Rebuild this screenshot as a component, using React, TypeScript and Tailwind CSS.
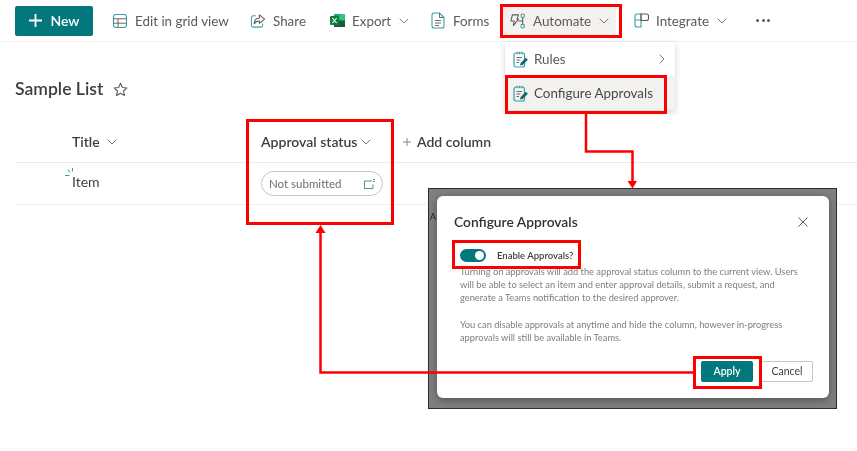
const Chevron = ({ className = "" }: { className?: string }) => (
  <svg width="10" height="6" viewBox="0 0 10 6" className={className} fill="none" stroke="#7a7876" strokeWidth="1">
    <path d="M.7.7 5 5 9.3.7" />
  </svg>
);
const Teal = "#3a9ea5";
const Dark = "#5b5a58";

const GridIcon = () => (
  <svg width="16" height="16" viewBox="0 0 16 16" fill="none" stroke={Teal} strokeWidth="1.1">
    <rect x="1.5" y="1.5" width="13" height="13" rx="2.5" />
    <path d="M1.5 5.8h13M1.5 10.2h13M6 5.8v8.7" stroke={Dark} strokeWidth=".9" />
  </svg>
);
const ShareIcon = () => (
  <svg width="17" height="16" viewBox="0 0 17 16" fill="none" strokeWidth="1.1">
    <path d="M6 2.500H3.500a2 2 0 0 0-2 2v8a2 2 0 0 0 2 2h8a2 2 0 0 0 2-2V11" stroke={Teal} />
    <path d="M10 1.500 15.500 6 10 10.500V8c-3 0-4.500 1-5.500 3 0-3.500 2-6 5.500-6.300z" stroke={Dark} strokeLinejoin="round" />
  </svg>
);
const ExcelIcon = () => (
  <svg width="15" height="15" viewBox="0 0 15 15">
    <rect x="4" y="1" width="11" height="13" rx="1" fill="#21a366" />
    <rect x="9.500" y="1" width="5.500" height="6.500" fill="#33c481" />
    <rect x="4" y="7.500" width="11" height="6.500" fill="#185c37" />
    <rect x="0" y="3" width="9" height="9" rx="1" fill="#107c41" />
    <path d="m2.400 5 4.200 5M6.600 5l-4.200 5" stroke="#fff" strokeWidth="1.100" />
  </svg>
);
const FormsIcon = () => (
  <svg width="14" height="17" viewBox="0 0 14 17" fill="none" strokeWidth="1.1">
    <path d="M8.500 1H3a2 2 0 0 0-2 2v11a2 2 0 0 0 2 2h8a2 2 0 0 0 2-2V5.500z" stroke={Teal} />
    <path d="M8.500 1v4.500H13M4 8.500h6M4 11h6M4 13.500h4" stroke={Dark} strokeWidth=".9" />
  </svg>
);
const AutomateIcon = () => (
  <svg width="17" height="16" viewBox="0 0 17 16" fill="none" strokeWidth="1.1">
    <path d="M2.500 1.500h6.500L7.500 6H9L3.500 13l1-5H1z" stroke={Dark} strokeLinejoin="round" />
    <circle cx="13.500" cy="2.500" r="1.900" stroke={Teal} />
    <circle cx="13.500" cy="13.500" r="1.900" stroke={Teal} />
    <path d="M13.500 4.500v7M13.500 8H9" stroke={Dark} />
  </svg>
);
const IntegrateIcon = () => (
  <svg width="15" height="16" viewBox="0 0 15 16" fill="none" strokeWidth="1.1">
    <path d="M7 1H3a2 2 0 0 0-2 2v4h6zM7 7H1v5a2 2 0 0 0 2 2h4z" stroke={Teal} />
    <path d="M7 1h5.500a2 2 0 0 1 2 2v2.500a2 2 0 0 1-2 2H7z" stroke={Dark} />
  </svg>
);
const RuleIcon = () => (
  <svg width="16" height="17" viewBox="0 0 16 17" fill="none">
    <rect x="1" y="2" width="10.500" height="14" rx="2" stroke={Teal} strokeWidth="1.200" />
    <path d="M4 .8v2.400M6.500.8v2.400M9 .8v2.400" stroke={Teal} strokeWidth="1.100" />
    <path d="M3.500 6.500h5.500M3.500 9h4M3.500 11.500h2.500" stroke={Dark} strokeWidth=".9" />
    <path d="m7 14.500.6-2.600 5.200-5.200 2.100 2.100-5.200 5.200z" fill="#0b6a70" />
  </svg>
);

const ToolItem = ({ icon, label, chevron, className = "" }: { icon: React.ReactNode; label: string; chevron?: boolean; className?: string }) => (
  <div className={`flex h-[30px] items-center ${className}`}>
    <span className="flex w-[16px] shrink-0 justify-center">{icon}</span>
    <span className="ml-[7px] whitespace-nowrap pt-[1px] text-[13.400px] text-[#5c5a58]">{label}</span>
    {chevron && <Chevron className="ml-[8px]" />}
  </div>
);

const RedBox = ({ className }: { className: string }) => (
  <div className={`pointer-events-none absolute border-[3px] border-[#fe0000] ${className}`} />
);

export default function App() {
  return (
    <div
      className="relative h-[451px] w-[857px] overflow-hidden bg-white text-[14px] text-[#3f3e3d] blur-[0.3px]"
      style={{ fontFamily: 'Lato, "Noto Sans", sans-serif' }}
    >
      {/* Command bar */}
      <header className="flex h-[42px] items-center border-b border-[#f1f0ef] pl-[15px]">
        <button className="flex h-[30px] w-[78px] items-center justify-center gap-[8px] rounded-[2px] bg-[#03787c] pl-[1px] text-[14px] font-semibold text-white">
          <svg width="13" height="13" viewBox="0 0 13 13" stroke="#fff" strokeWidth="1.800"><path d="M6.500 0v13M0 6.500h13" /></svg>
          New
        </button>
        <ToolItem className="ml-[19px] w-[118px]" icon={<GridIcon />} label="Edit in grid view" />
        <ToolItem className="ml-[20px] w-[58px]" icon={<ShareIcon />} label="Share" />
        <ToolItem className="ml-[21px] w-[80px]" icon={<ExcelIcon />} label="Export" chevron />
        <ToolItem className="ml-[21px] w-[61px]" icon={<FormsIcon />} label="Forms" />
        <ToolItem className="ml-[11px] w-[114px] bg-[#f3f2f1] pl-[8px]" icon={<AutomateIcon />} label="Automate" chevron />
        <ToolItem className="ml-[17px] w-[96px]" icon={<IntegrateIcon />} label="Integrate" chevron />
        <div className="ml-[27px] flex gap-[2.500px]">
          <span className="h-[3px] w-[3px] rounded-full bg-[#5c5a58]" />
          <span className="h-[3px] w-[3px] rounded-full bg-[#5c5a58]" />
          <span className="h-[3px] w-[3px] rounded-full bg-[#5c5a58]" />
        </div>
      </header>

      {/* List title */}
      <div className="mt-[34px] flex h-[26px] items-center pl-[15px]">
        <h1 className="text-[17.600px] font-semibold leading-none text-[#3f3e3d]">Sample List</h1>
        <svg className="ml-[10px]" width="15" height="15" viewBox="0 0 24 24" fill="none" stroke="#5c5a58" strokeWidth="1.700" strokeLinejoin="round">
          <path d="m12 2 3 6.800 7.300.7-5.500 4.900 1.600 7.300L12 17.900l-6.400 3.800 1.600-7.300-5.500-4.900L9 8.800z" />
        </svg>
      </div>

      {/* List */}
      <div className="mt-[22px] ml-[15px]">
        <div className="flex h-[39px] items-center border-b border-[#edebe9] pb-[3px] font-semibold">
          <div className="flex w-[246px] items-center pl-[57px]">
            Title
            <Chevron className="ml-[7px]" />
          </div>
          <div className="flex w-[142px] items-center">
            Approval status
            <Chevron className="ml-[4px]" />
          </div>
          <div className="flex items-center">
            <svg width="8" height="8" viewBox="0 0 8 8" stroke="#8a8886"><path d="M4 0v8M0 4h8" /></svg>
            <span className="ml-[6px]">Add column</span>
          </div>
        </div>
        <div className="relative flex h-[42px] items-center border-b border-[#f1f0ef]">
          <div className="relative w-[246px] pb-[4px] pl-[57px]">
            <svg className="absolute left-[50px] top-[-3px]" width="9" height="9" viewBox="0 0 9 9" fill="none" stroke={Teal} strokeWidth="1">
              <path d="M0 7.500h4.500M3 1.500 5 4.500M7.500 0v3.500" />
            </svg>
            Item
          </div>
          <div className="flex h-[25px] w-[122px] items-center justify-between rounded-full border border-[#c8c6c4] pl-[7px] pr-[6px] text-[11.500px] text-[#6f6e6c]">
            Not submitted
            <svg width="12" height="10" viewBox="0 0 12 10" fill="none" stroke="#5b8d92"><path d="M8 2H.5v7.500h8.500V5.500" /><path d="M10 0v3" stroke={Teal} strokeWidth="2" strokeDasharray="1 1" /></svg>
          </div>
        </div>
      </div>

      {/* Open Automate menu */}
      <div className="absolute left-[505px] top-[42px] w-[170px] bg-white text-[13.400px] shadow-[0_2px_6px_rgba(0,0,0,0.18)]">
        <div className="flex h-[34px] items-center pl-[8px] pr-[10px] text-[#5c5a58]">
          <RuleIcon />
          <span className="ml-[5px] flex-1">Rules</span>
          <svg width="6" height="10" viewBox="0 0 6 10" fill="none" stroke="#7a7876"><path d="m.7.700 4.300 4.300L.7 9.300" /></svg>
        </div>
        <div className="flex h-[34px] items-center bg-[#f3f2f1] pl-[8px] text-[#4a4947]">
          <RuleIcon />
          <span className="ml-[5px]">Configure Approvals</span>
        </div>
      </div>

      {/* Dialog inset screenshot */}
      <div className="absolute left-[428px] top-[188px] h-[221px] w-[409px] overflow-hidden border border-[#2b2b2b] bg-[#7f7f7f]">
        <span className="absolute left-[1px] top-[21px] text-[9px] text-[#222]">A</span>
        <div className="absolute left-[8px] top-[7px] flex h-[202px] w-[392px] flex-col rounded-[6px] bg-white px-[17px] pb-[16px] shadow-[0_2px_8px_rgba(0,0,0,0.35)]">
          <div className="mt-[16px] flex items-center justify-between pr-[4px]">
            <h2 className="text-[13.800px] font-semibold leading-[20px] text-[#323130]">Configure Approvals</h2>
            <svg width="10" height="10" viewBox="0 0 10 10" stroke="#5c5a58"><path d="m.5.500 9 9M9.500.500l-9 9" /></svg>
          </div>
          <div className="mt-[17px] flex items-center pl-[6px]">
            <div className="flex h-[13px] w-[26px] items-center justify-end rounded-full bg-[#03787c] pr-[2px]">
              <span className="h-[9px] w-[9px] rounded-full bg-white" />
            </div>
            <span className="ml-[11px] text-[9.500px] font-semibold leading-[13px] text-[#3f3e3d]">Enable Approvals?</span>
          </div>
          <div className="mt-[3px] whitespace-nowrap pl-[6px] text-[9.300px] leading-[13.200px] text-[#807e7c]">
            <p>Turning on approvals will add the approval status column to the current view. Users<br />will be able to select an item and enter approval details, submit a request, and<br />generate a Teams notification to the desired approver.</p>
            <p className="mt-[13px]">You can disable approvals at anytime and hide the column, however in-progress<br />approvals will still be available in Teams.</p>
          </div>
          <div className="mt-auto flex justify-end">
            <button className="h-[21px] w-[52px] rounded-[2px] bg-[#03787c] text-[10.500px] font-semibold text-white">Apply</button>
            <button className="mr-[-1px] ml-[8px] h-[21px] w-[52px] rounded-[2px] border border-[#c8c6c4] bg-white text-[10.500px] text-[#3f3e3d]">Cancel</button>
          </div>
        </div>
      </div>

      {/* Annotations */}
      <RedBox className="left-[500px] top-[4px] h-[34px] w-[122px]" />
      <RedBox className="left-[505px] top-[75px] h-[39px] w-[162px]" />
      <RedBox className="left-[246px] top-[119px] h-[106px] w-[148px]" />
      <RedBox className="left-[452px] top-[240px] h-[29px] w-[129px]" />
      <RedBox className="left-[693px] top-[356px] h-[33px] w-[69px]" />
      <svg className="pointer-events-none absolute left-0 top-0" width="857" height="451" fill="none">
        <path d="M586 114v37.500h46.500V182" stroke="#fe0000" strokeWidth="2.500" />
        <path d="m627.500 181 5-.1 4.500.1-4.500 7.500z" fill="#fe0000" />
        <path d="M693 372.500H320.500V232" stroke="#fe0000" strokeWidth="2.500" />
        <path d="m315.500 233 5-8 5 8z" fill="#fe0000" />
      </svg>
    </div>
  );
}
